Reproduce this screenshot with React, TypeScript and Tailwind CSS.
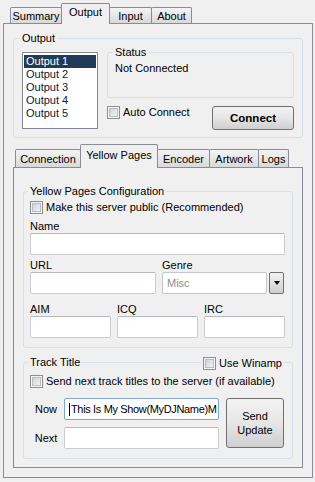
import type { ReactNode } from 'react'

type TabProps = {
  label: string
  active?: boolean
  width: string
  small?: boolean
  first?: boolean
}

function Tab({ label, active, width, small, first }: TabProps) {
  const base = `flex shrink-0 items-center justify-center rounded-t-[2px] border-x border-t border-[#898c95] ${width} ${
    first ? '' : '-ml-px'
  }`
  if (active) {
    return (
      <div className={`${base} relative z-10 mb-[-1px] bg-[#f0f0f0] ${small ? 'h-[24px] pb-[3px]' : 'h-[21px] pb-[3px]'}`}>
        {label}
      </div>
    )
  }
  return (
    <div
      className={`${base} bg-gradient-to-b from-[#f4f4f4] to-[#d9d9d9] ${small ? 'h-[18px] pt-px' : 'h-[16px] pt-px'}`}
    >
      {label}
    </div>
  )
}

function CheckBox({ label }: { label: string }) {
  return (
    <div className="flex h-[13px] items-center gap-[3px] leading-[13px]">
      <span className="flex h-[13px] w-[13px] shrink-0 items-center justify-center border border-[#8e8f8f] bg-[#f4f4f4]">
        <span className="h-[9px] w-[9px] border border-[#b9bcc1] bg-gradient-to-br from-[#cfd2d6] to-[#f3f3f3]" />
      </span>
      <span>{label}</span>
    </div>
  )
}

function TextBox({ width, children, focused }: { width: string; children?: ReactNode; focused?: boolean }) {
  return (
    <div
      className={`flex h-[22px] items-center overflow-hidden whitespace-nowrap rounded-[2px] border bg-white pl-[4px] ${width} ${
        focused ? 'border-[#7ea6d4]' : 'border-[#c9ccd2] border-t-[#b4b8bf]'
      }`}
    >
      {children}
    </div>
  )
}

function Group({ title, className, children }: { title: string; className: string; children: ReactNode }) {
  return (
    <fieldset className={`rounded-[3px] border border-[#d5dfe5] ${className}`}>
      <legend className="-ml-[2px] px-[2px] leading-[13px]">{title}</legend>
      {children}
    </fieldset>
  )
}

const outputs = ['Output 1', 'Output 2', 'Output 3', 'Output 4', 'Output 5']

export default function App() {
  return (
    <div className="h-[482px] w-[315px] overflow-hidden bg-[#f0f0f0] pl-[3px] pt-[3px] font-['Liberation_Sans',Arial,sans-serif] text-[11px] leading-[13px] text-black">
      <div className="flex h-[20px] items-end pl-[7px]">
        <Tab label="Summary" width="w-[52px]" first />
        <Tab label="Output" width="w-[49px]" active />
        <Tab label="Input" width="w-[43px]" />
        <Tab label="About" width="w-[41px]" />
      </div>

      <div className="w-[310px] border border-[#898c95] bg-[#f0f0f0] pb-[9px]">
        <Group title="Output" className="ml-[9px] mt-[8px] w-[290px] pb-[7px] pl-[8px] pt-px">
          <div className="flex items-start">
            <div className="mt-[6px] h-[77px] w-[76px] shrink-0 border border-[#828790] bg-white px-px pt-[2px]">
              {outputs.map((o, i) => (
                <div
                  key={o}
                  className={`h-[13px] pl-[2px] leading-[13px] ${i === 0 ? 'bg-[#1f3b57] text-white' : 'text-[#0c1b33]'}`}
                >
                  {o}
                </div>
              ))}
            </div>
            <div className="ml-[9px] flex w-[187px] flex-col">
              <Group title="Status" className="w-[187px] pb-[22px] pl-[7px] pt-[3px]">
                <div>Not Connected</div>
              </Group>
              <div className="mt-[8px] flex items-start justify-between">
                <CheckBox label="Auto Connect" />
                <button
                  type="button"
                  className="h-[24px] w-[82px] rounded-[3px] border border-[#707070] bg-gradient-to-b from-[#f2f2f2] via-[#e6e6e6] to-[#cfcfcf] text-[11.5px] font-bold"
                >
                  Connect
                </button>
              </div>
            </div>
          </div>
        </Group>

        <div className="ml-[9px] mt-[6px] w-[290px]">
          <div className="flex h-[23px] items-end pl-[2px]">
            <Tab label="Connection" width="w-[66px]" small first />
            <Tab label="Yellow Pages" width="w-[78px]" small active />
            <Tab label="Encoder" width="w-[53px]" small />
            <Tab label="Artwork" width="w-[50px]" small />
            <Tab label="Logs" width="w-[31px]" small />
          </div>

          <div className="w-[290px] border border-[#898c95] bg-[#f0f0f0] pb-[8px]">
            <Group title="Yellow Pages Configuration" className="ml-[9px] mt-[17px] w-[270px] pb-[9px] pl-[6px] pt-[3px]">
              <CheckBox label="Make this server public (Recommended)" />
              <div className="mt-[6px]">Name</div>
              <TextBox width="w-[255px]" />
              <div className="mt-[4px] flex">
                <div className="flex flex-col">
                  <div>URL</div>
                  <TextBox width="w-[126px]" />
                </div>
                <div className="ml-[6px] flex flex-col">
                  <div>Genre</div>
                  <div className="flex items-center gap-[2px]">
                    <div className="flex h-[22px] w-[105px] items-center rounded-[2px] border border-[#c3c6cb] bg-white pl-[4px] text-[#8d8d8d]">
                      Misc
                    </div>
                    <div className="flex h-[22px] w-[15px] items-center justify-center rounded-[2px] border border-[#707070] bg-gradient-to-b from-[#f2f2f2] to-[#cfcfcf]">
                      <svg width="6" height="4" viewBox="0 0 6 4">
                        <path d="M0 0h6L3 4z" fill="#000" />
                      </svg>
                    </div>
                  </div>
                </div>
              </div>
              <div className="mt-[9px] flex gap-[6px]">
                {['AIM', 'ICQ', 'IRC'].map((l) => (
                  <div key={l} className="flex flex-col">
                    <div>{l}</div>
                    <TextBox width="w-[81px]" />
                  </div>
                ))}
              </div>
            </Group>

            <div className="relative ml-[9px] mt-[8px] w-[270px]">
              <Group title="Track Title" className="w-[270px] pb-[9px] pl-[6px] pt-[6px]">
                <CheckBox label="Send next track titles to the server (if available)" />
                <div className="mt-[10px] flex items-start">
                  <div className="flex flex-col gap-[7px]">
                    <div className="flex items-center">
                      <div className="w-[32px] text-center">Now</div>
                      <div className="ml-[2px]">
                        <TextBox width="w-[155px]" focused>
                          <span className="mr-px h-[13px] w-px shrink-0 bg-black" />
                          <span className="tracking-[-0.35px]">This Is My Show(MyDJName)M</span>
                        </TextBox>
                      </div>
                    </div>
                    <div className="flex items-center">
                      <div className="w-[32px] text-center">Next</div>
                      <div className="ml-[2px]">
                        <TextBox width="w-[155px]" />
                      </div>
                    </div>
                  </div>
                  <button
                    type="button"
                    className="ml-[7px] h-[50px] w-[58px] rounded-[3px] border border-[#707070] bg-gradient-to-b from-[#f2f2f2] via-[#e6e6e6] to-[#cfcfcf] leading-[14px]"
                  >
                    Send
                    <br />
                    Update
                  </button>
                </div>
              </Group>
              <div className="absolute left-[178px] top-px bg-[#f0f0f0] px-[2px]">
                <CheckBox label="Use Winamp" />
              </div>
            </div>
          </div>
        </div>
      </div>
    </div>
  )
}
